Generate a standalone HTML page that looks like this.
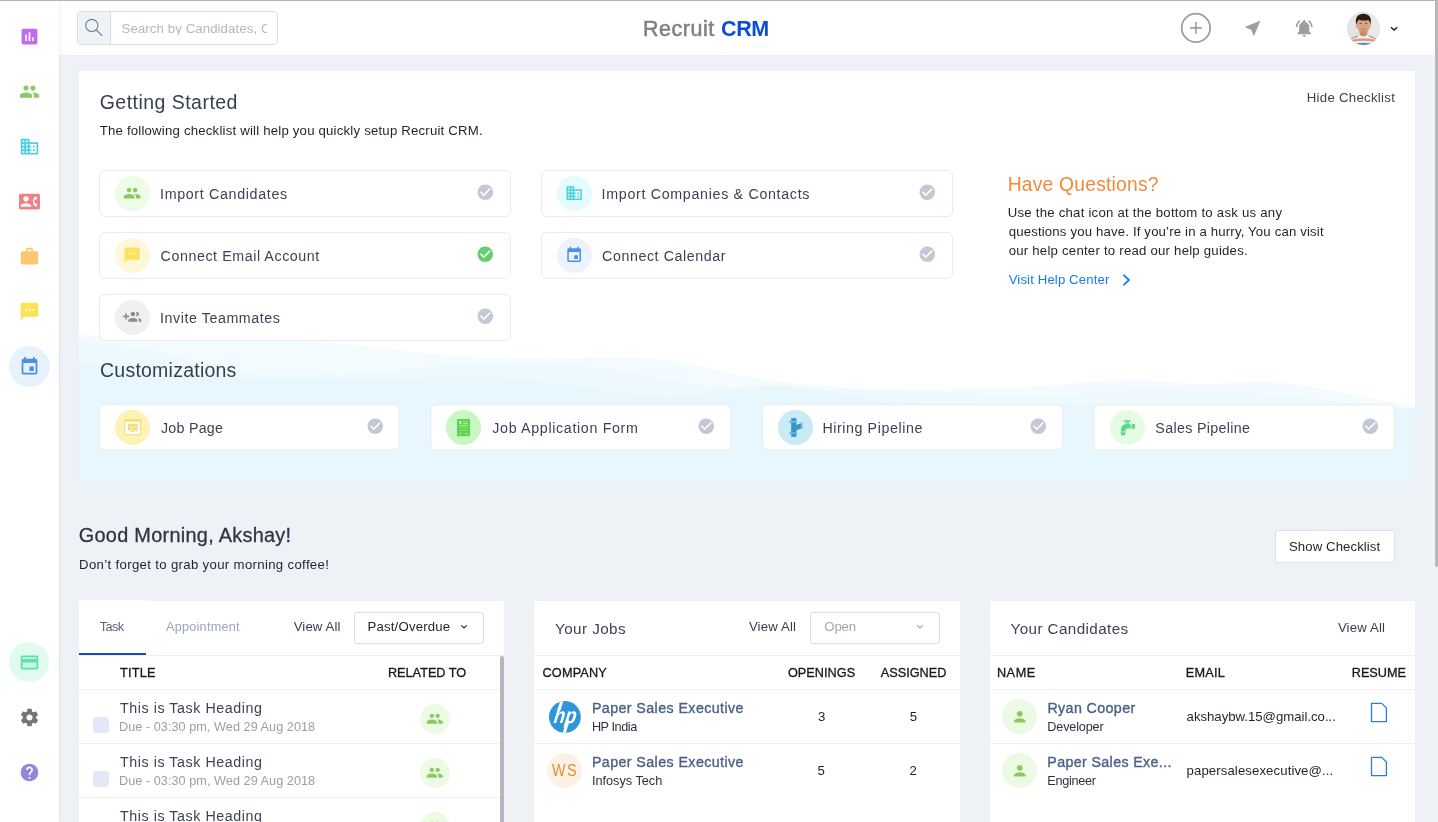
<!DOCTYPE html>
<html lang="en">
<head>
<meta charset="utf-8">
<title>Recruit CRM</title>
<style>
*{box-sizing:border-box;margin:0;padding:0}
html,body{width:1438px;height:822px;overflow:hidden;background:#eef2f7;font-family:"Liberation Sans",sans-serif;color:#1e232c}
#app{will-change:transform;position:relative;width:1438px;height:822px;overflow:hidden;background:#eef2f7}
.a{position:absolute}
.t{position:absolute;white-space:nowrap}
svg{position:absolute;display:block;overflow:visible}
.ci{position:absolute;height:47px;width:412px;border:1px solid #ebebed;border-radius:6px;background:#fff}
.cz{position:absolute;height:46px;width:301px;border:1px solid #ececec;border-radius:6px;background:#fff;top:404px}
.circ{position:absolute;border-radius:50%}
.panel{position:absolute;top:601px;height:230px;background:#fff}
.hl{position:absolute;height:1px;background:#f0f1f4}
.sel{position:absolute;top:612px;width:130px;height:32px;background:#fff;border:1px solid #d9e0ea;border-radius:3px}
.cb{position:absolute;left:93px;width:16px;height:16px;border-radius:3px;background:#e2e8f5}

</style>
</head>
<body>
<div id="app">
<div class="a" style="left:0;top:0;width:1438px;height:1px;background:#b4b4b8;z-index:50"></div>
<div class="a" style="left:1435px;top:0;width:3px;height:822px;background:#f0f1f4;z-index:60"></div>
<div class="a" style="left:1435px;top:0;width:3px;height:567px;background:#b6b6bc;border-radius:0 0 2px 2px;z-index:61"></div>
<div class="a" style="left:0;top:1px;width:59px;height:821px;background:#fff;box-shadow:1px 0 3px rgba(200,200,232,.3);z-index:5"></div>
<div class="a" style="left:59px;top:1px;width:1376px;height:54px;background:#fff;z-index:4"></div>
<svg style="left:19.00px;top:26.00px;z-index:6;" width="21" height="21" viewBox="0 0 24 24"><path fill="#bf6af0" d="M19 3H5c-1.1 0-2 .9-2 2v14c0 1.1.9 2 2 2h14c1.1 0 2-.9 2-2V5c0-1.1-.9-2-2-2zM9 17H7v-7h2v7zm4 0h-2V7h2v10zm4 0h-2v-4h2v4z"/></svg>
<svg style="left:19.00px;top:81.00px;z-index:6;" width="21" height="21" viewBox="0 0 24 24"><path fill="#8cc963" d="M16 11c1.66 0 2.99-1.34 2.99-3S17.66 5 16 5c-1.66 0-3 1.34-3 3s1.34 3 3 3zm-8 0c1.66 0 2.99-1.34 2.99-3S9.66 5 8 5C6.34 5 5 6.34 5 8s1.34 3 3 3zm0 2c-2.33 0-7 1.17-7 3.5V19h14v-2.500c0-2.33-4.67-3.500-7-3.500zm8 0c-.29 0-.62.020-.97.050 1.16.84 1.97 1.97 1.97 3.450V19h6v-2.500c0-2.330-4.670-3.500-7-3.500z"/></svg>
<svg style="left:19.00px;top:135.80px;z-index:6;" width="21" height="21" viewBox="0 0 24 24"><path fill="#4dd0e1" d="M12 7V3H2v18h20V7H12zM6 19H4v-2h2v2zm0-4H4v-2h2v2zm0-4H4V9h2v2zm0-4H4V5h2v2zm4 12H8v-2h2v2zm0-4H8v-2h2v2zm0-4H8V9h2v2zm0-4H8V5h2v2zm10 12h-8v-2h2v-2h-2v-2h2v-2h-2V9h8v10zm-2-8h-2v2h2v-2zm0 4h-2v2h2v-2z"/></svg>
<svg style="left:19.00px;top:190.80px;z-index:6;" width="21" height="21" viewBox="0 0 24 24"><path fill="#ef8287" d="M22 3H2C.9 3 0 3.9 0 5v14c0 1.1.9 2 2 2h20c1.1 0 1.99-.9 1.99-2L24 5c0-1.1-.9-2-2-2zM8 6c1.66 0 3 1.34 3 3s-1.34 3-3 3-3-1.34-3-3 1.34-3 3-3zm6 12H2v-1c0-2 4-3.1 6-3.1s6 1.1 6 3.1v1zm3.85-4h1.64L21 16l-1.99 1.99c-1.31-.98-2.28-2.38-2.73-3.99-.18-.64-.28-1.31-.28-2s.1-1.36.28-2c.45-1.620 1.420-3.010 2.730-3.990L21 8l-1.510 2h-1.640c-.22.63-.35 1.3-.35 2s.13 1.370.35 2z"/></svg>
<svg style="left:19.00px;top:245.80px;z-index:6;" width="21" height="21" viewBox="0 0 24 24"><path fill="#fdc76f" d="M20 6h-4V4c0-1.11-.89-2-2-2h-4c-1.110 0-2 .89-2 2v2H4c-1.110 0-1.990.89-1.990 2L2 19c0 1.110.89 2 2 2h16c1.110 0 2-.89 2-2V8c0-1.110-.89-2-2-2zm-6 0h-4V4h4v2z"/></svg>
<svg style="left:19.00px;top:300.90px;z-index:6;" width="21" height="21" viewBox="0 0 24 24"><path fill="#fde253" d="M20 2H4c-1.1 0-1.99.9-1.990 2L2 22l4-4h14c1.100 0 2-.9 2-2V4c0-1.100-.9-2-2-2zM9 11H7V9h2v2zm4 0h-2V9h2v2zm4 0h-2V9h2v2z"/></svg>
<div class="circ" style="left:8.50px;top:345.50px;width:41px;height:41px;background:#e8f2fd;z-index:6;"></div>
<svg style="left:19.00px;top:355.50px;z-index:6;" width="21" height="21" viewBox="0 0 24 24"><path fill="#4a8fe8" d="M17 12h-5v5h5v-5zM16 1v2H8V1H6v2H5c-1.110 0-1.990.9-1.990 2L3 19c0 1.100.89 2 2 2h14c1.100 0 2-.9 2-2V5c0-1.100-.9-2-2-2h-1V1h-2zm3 18H5V8h14v11z"/></svg>
<div class="circ" style="left:9.00px;top:642.00px;width:40px;height:40px;background:#e2fbef;z-index:6;"></div>
<svg style="left:19px;top:651.5px;z-index:6" width="21" height="21" viewBox="0 0 24 24"><rect x="3.5" y="5.500" width="17" height="13" rx="1.500" fill="#c9f6e1"/><path fill="#5fe2aa" d="M20 4H4c-1.110 0-1.990.89-1.990 2L2 18c0 1.110.89 2 2 2h16c1.110 0 2-.89 2-2V6c0-1.110-.89-2-2-2zm0 14H4v-6h16v6zm0-10H4V6h16v2z"/></svg>
<svg style="left:19.00px;top:706.70px;z-index:6;" width="21" height="21" viewBox="0 0 24 24"><path fill="#757575" d="M19.43 12.98c.04-.32.07-.64.07-.98s-.03-.66-.07-.98l2.110-1.650c.19-.15.24-.42.12-.64l-2-3.460c-.12-.22-.39-.3-.61-.22l-2.490 1c-.52-.4-1.080-.73-1.690-.98l-.38-2.650C14.460 2.180 14.250 2 14 2h-4c-.25 0-.46.18-.49.42l-.38 2.650c-.61.25-1.170.59-1.690.98l-2.490-1c-.23-.09-.49 0-.61.22l-2 3.460c-.13.22-.07.49.12.64l2.110 1.650c-.04.32-.07.65-.07.98s.03.66.07.98l-2.110 1.650c-.19.15-.24.42-.12.64l2 3.460c.12.22.39.3.61.22l2.490-1c.52.4 1.080.73 1.690.98l.38 2.650c.03.24.24.42.49.420h4c.25 0 .46-.18.49-.42l.38-2.650c.61-.25 1.170-.59 1.690-.98l2.490 1c.23.09.49 0 .61-.22l2-3.460c.12-.22.07-.49-.12-.64l-2.110-1.650zM12 15.500c-1.930 0-3.500-1.570-3.500-3.500s1.570-3.500 3.500-3.500 3.500 1.570 3.500 3.500-1.570 3.500-3.500 3.500z"/></svg>
<svg style="left:19.00px;top:762.00px;z-index:6;" width="21" height="21" viewBox="0 0 24 24"><path fill="#9087d9" d="M12 2C6.480 2 2 6.480 2 12s4.480 10 10 10 10-4.480 10-10S17.520 2 12 2zm1 17h-2v-2h2v2zm2.070-7.750l-.9.92C13.450 12.900 13 13.500 13 15h-2v-.5c0-1.100.45-2.100 1.170-2.830l1.240-1.260c.37-.36.59-.86.59-1.410 0-1.100-.9-2-2-2s-2 .9-2 2H8c0-2.210 1.790-4 4-4s4 1.790 4 4c0 .88-.36 1.680-.93 2.250z"/></svg>
<div class="a" style="left:77px;top:11px;width:201px;height:34px;border:1px solid #d6deea;border-radius:4px;background:#fff;z-index:6"><div class="a" style="left:0;top:0;width:33px;height:32px;background:#eff3f6;border-right:1px solid #d6deea;border-radius:3px 0 0 3px"></div></div>
<svg style="left:83px;top:17px;z-index:7" width="22" height="22" viewBox="0 0 22 22"><circle cx="8.800" cy="8.400" r="6.100" fill="none" stroke="#71869a" stroke-width="1.200"/><path d="M13.200 12.900L18.700 18.200" stroke="#71869a" stroke-width="1.300" stroke-linecap="round"/></svg>
<svg style="left:1180px;top:12px;z-index:7" width="32" height="32" viewBox="0 0 32 32"><circle cx="15.900" cy="15.900" r="14.200" fill="none" stroke="#9e9e9e" stroke-width="1.800"/><path d="M10 15.900H21.800M15.900 10V21.800" stroke="#9e9e9e" stroke-width="1.600"/></svg>
<svg style="left:1242.60px;top:18.10px;z-index:7;" width="20" height="20" viewBox="0 0 24 24"><path fill="#9e9e9e" d="M21 3L3 10.530v.98l6.840 2.650L12.480 21h.98L21 3z"/></svg>
<svg style="left:1294.00px;top:17.80px;z-index:7;" width="20.4" height="20.4" viewBox="0 0 24 24"><path fill="#9e9e9e" d="M7.580 4.080L6.150 2.650C3.750 4.480 2.170 7.300 2.030 10.500h2c.15-2.650 1.510-4.970 3.550-6.420zm12.390 6.420h2c-.15-3.200-1.730-6.020-4.120-7.850l-1.420 1.430c2.020 1.450 3.390 3.770 3.540 6.420zM18 11c0-3.070-1.640-5.640-4.500-6.320V4c0-.83-.67-1.500-1.500-1.500s-1.500.67-1.500 1.500v.68C7.630 5.360 6 7.920 6 11v5l-2 2v1h16v-1l-2-2v-5zm-6 11c.14 0 .27-.01.4-.04.65-.14 1.180-.58 1.440-1.180.1-.24.15-.5.15-.78h-4c.010 1.100.9 2 2.010 2z"/></svg>
<svg style="left:1347px;top:12px;z-index:7" width="33" height="33" viewBox="0 0 33 33">
<clipPath id="av"><circle cx="16.500" cy="16.500" r="16.500"/></clipPath>
<g clip-path="url(#av)">
<rect width="33" height="33" fill="#e3e3e3"/>
<rect x="22" width="11" height="33" fill="#e9e9e9"/>
<path d="M3.200 33C3.500 26.500 6 24.800 12.300 22.600L16.400 24.500L20.500 22.600C27 24.800 29.500 26.500 29.800 33Z" fill="#f4f2ef"/>
<path d="M4.300 26.200Q7.500 24.300 11.500 23L10.600 25Q7 26 3.800 27.600Z" fill="#a3a284"/>
<path d="M28.700 26.200Q25.500 24.300 21.500 23L22.400 25Q26 26 29.200 27.600Z" fill="#a3a284"/>
<path d="M3.600 28Q16.500 24.700 29.400 28L29.900 30.300Q16.500 27.300 3.100 30.300Z" fill="#e8908c"/>
<path d="M6 31.800Q16.500 29.800 27 31.800L25 34H8Z" fill="#5b8fc3"/>
<path d="M12.600 17V22.800Q16.400 26.300 20.300 22.800V17Z" fill="#c98a69"/>
<path d="M9.700 12.500Q8.600 12.300 9 14.200T10.500 16.200Z" fill="#d39a78"/>
<path d="M23.100 12.500Q24.200 12.300 23.800 14.200T22.300 16.200Z" fill="#d39a78"/>
<path d="M10.200 9.500C10.200 5.500 22.600 5.500 22.600 9.500V14.500C22.600 18.500 19.500 21.200 16.400 21.200S10.200 18.500 10.200 14.500Z" fill="#dba382"/>
<path d="M12.600 17.500Q16.400 20.500 20.200 17.500Q19 20.900 16.400 21.100Q13.800 20.900 12.600 17.500Z" fill="#c78b6c"/>
<path d="M9.600 13C7 5 11.500 1.700 16.400 1.700S25.800 5 23.200 13C23 10.500 22.300 8.700 21.300 8C18.500 8.900 14 8.700 11.800 7.700C10.700 8.700 9.900 10.500 9.600 13Z" fill="#2b1912"/>
<ellipse cx="13.600" cy="11.300" rx="1.100" ry=".55" fill="#4a3426"/><ellipse cx="19.200" cy="11.300" rx="1.100" ry=".55" fill="#4a3426"/>
<path d="M14.400 16.900Q16.400 17.700 18.400 16.900" stroke="#b5645a" stroke-width=".9" fill="none"/>
</g></svg>
<svg style="left:1390.100px;top:25.800px;z-index:7" width="8" height="6" viewBox="0 0 8 6"><path d="M1 1.200L4.100 4.100L7.200 1.200" fill="none" stroke="#1a1a1a" stroke-width="1.400"/></svg>
<div class="a" style="left:79px;top:71px;width:1336px;height:411.500px;background:#fff;overflow:hidden">
<svg style="left:0;top:0" width="1336" height="412" viewBox="79 71 1336 412">
<path d="M79 335C99.2 335.5 157.7 336.7 200 338C242.3 339.3 294.2 340.3 333 343C371.8 345.7 402.2 351.3 433 354C463.8 356.7 481.8 358.3 518 359C554.2 359.7 611.3 355.0 650 358C688.7 361.0 716.7 372.0 750 377C783.3 382.0 808.3 386.2 850 388C891.7 389.8 954.2 389.3 1000 388C1045.8 386.7 1091.7 380.7 1125 380C1158.3 379.3 1175.0 383.7 1200 384C1225.0 384.3 1250.0 380.3 1275 382C1300.0 383.7 1326.7 389.8 1350 394C1373.3 398.2 1404.2 404.8 1415 407V483H79Z" fill="#f4fbff"/>
<path d="M79 341C91.5 342.5 129.0 345.3 154 350C179.0 354.7 204.0 364.7 229 369C254.0 373.3 269.0 376.5 304 376C339.0 375.5 403.0 368.3 439 366C475.0 363.7 493.2 361.7 520 362C546.8 362.3 570.0 364.2 600 368C630.0 371.8 670.0 381.0 700 385C730.0 389.0 755.0 391.2 780 392C805.0 392.8 820.0 389.8 850 390C880.0 390.2 926.7 392.0 960 393C993.3 394.0 1022.5 396.5 1050 396C1077.5 395.5 1091.7 390.5 1125 390C1158.3 389.5 1201.7 389.7 1250 393C1298.3 396.3 1387.5 407.2 1415 410V483H79Z" fill="#eef9fe"/>
<path d="M79 362C91.5 363.7 124.8 369.2 154 372C183.2 374.8 221.3 377.7 254 379C286.7 380.3 312.3 380.3 350 380C387.7 379.7 443.3 376.2 480 377C516.7 377.8 538.8 381.7 570 385C601.2 388.3 632.0 396.8 667 397C702.0 397.2 741.7 385.2 780 386C818.3 386.8 860.3 399.0 897 402C933.7 405.0 913.7 403.0 1000 404C1086.3 405.0 1345.8 407.3 1415 408V483H79Z" fill="#e8f6fe"/>
</svg>
</div>
<div class="ci" style="left:99px;top:170px"></div>
<div class="circ" style="left:115.00px;top:176.00px;width:35px;height:35px;background:#eefbe6;"></div>
<svg style="left:123.45px;top:184.25px;" width="18.3" height="18.3" viewBox="0 0 24 24"><path fill="#8cc963" d="M16 11c1.66 0 2.99-1.34 2.99-3S17.66 5 16 5c-1.66 0-3 1.34-3 3s1.34 3 3 3zm-8 0c1.66 0 2.99-1.34 2.99-3S9.66 5 8 5C6.34 5 5 6.34 5 8s1.34 3 3 3zm0 2c-2.33 0-7 1.17-7 3.5V19h14v-2.500c0-2.33-4.67-3.500-7-3.500zm8 0c-.29 0-.62.020-.97.050 1.16.84 1.97 1.97 1.97 3.450V19h6v-2.500c0-2.330-4.670-3.500-7-3.500z"/></svg>
<svg style="left:476.00px;top:183.30px;" width="18.6" height="18.6" viewBox="0 0 24 24"><path fill="#c4c8d5" d="M12 2C6.480 2 2 6.480 2 12s4.480 10 10 10 10-4.480 10-10S17.520 2 12 2zm-2 15l-5-5 1.410-1.410L10 14.170l7.590-7.590L19 8l-9 9z"/></svg>
<div class="ci" style="left:99px;top:232px"></div>
<div class="circ" style="left:115.00px;top:238.00px;width:35px;height:35px;background:#fff7d9;"></div>
<svg style="left:123.45px;top:246.25px;" width="18.3" height="18.3" viewBox="0 0 24 24"><path fill="#fde35a" d="M20 2H4c-1.1 0-1.99.9-1.990 2L2 22l4-4h14c1.100 0 2-.9 2-2V4c0-1.100-.9-2-2-2zM9 11H7V9h2v2zm4 0h-2V9h2v2zm4 0h-2V9h2v2z"/></svg>
<svg style="left:476.00px;top:245.30px;" width="18.6" height="18.6" viewBox="0 0 24 24"><path fill="#5fd06c" d="M12 2C6.480 2 2 6.480 2 12s4.480 10 10 10 10-4.480 10-10S17.520 2 12 2zm-2 15l-5-5 1.410-1.410L10 14.170l7.590-7.590L19 8l-9 9z"/></svg>
<div class="ci" style="left:99px;top:294px"></div>
<div class="circ" style="left:115.00px;top:300.00px;width:35px;height:35px;background:#f0f0f0;"></div>
<svg style="left:123.45px;top:308.25px;" width="18.3" height="18.3" viewBox="0 0 24 24"><path fill="#8d8d8d" d="M8 10H5V7H3v3H0v2h3v3h2v-3h3v-2zm10 1c1.660 0 2.990-1.340 2.990-3S19.660 5 18 5c-.32 0-.63.05-.91.14.57.81.9 1.790.9 2.860s-.34 2.040-.9 2.860c.28.09.59.14.91.14zm-5 0c1.660 0 2.990-1.340 2.990-3S14.660 5 13 5c-1.660 0-3 1.340-3 3s1.340 3 3 3zm6.620 2.160c.83.73 1.380 1.660 1.380 2.840v2h3v-2c0-1.540-2.370-2.490-4.380-2.840zM13 13c-2 0-6 1-6 3v2h12v-2c0-2-4-3-6-3z"/></svg>
<svg style="left:476.00px;top:307.30px;" width="18.6" height="18.6" viewBox="0 0 24 24"><path fill="#c4c8d5" d="M12 2C6.480 2 2 6.480 2 12s4.480 10 10 10 10-4.480 10-10S17.520 2 12 2zm-2 15l-5-5 1.410-1.410L10 14.170l7.590-7.590L19 8l-9 9z"/></svg>
<div class="ci" style="left:541px;top:170px"></div>
<div class="circ" style="left:557.00px;top:176.00px;width:35px;height:35px;background:#e5fcfc;"></div>
<svg style="left:565.45px;top:184.25px;" width="18.3" height="18.3" viewBox="0 0 24 24"><path fill="#4dd0e1" d="M12 7V3H2v18h20V7H12zM6 19H4v-2h2v2zm0-4H4v-2h2v2zm0-4H4V9h2v2zm0-4H4V5h2v2zm4 12H8v-2h2v2zm0-4H8v-2h2v2zm0-4H8V9h2v2zm0-4H8V5h2v2zm10 12h-8v-2h2v-2h-2v-2h2v-2h-2V9h8v10zm-2-8h-2v2h2v-2zm0 4h-2v2h2v-2z"/></svg>
<svg style="left:918.00px;top:183.30px;" width="18.6" height="18.6" viewBox="0 0 24 24"><path fill="#c4c8d5" d="M12 2C6.480 2 2 6.480 2 12s4.480 10 10 10 10-4.480 10-10S17.520 2 12 2zm-2 15l-5-5 1.410-1.410L10 14.170l7.590-7.590L19 8l-9 9z"/></svg>
<div class="ci" style="left:541px;top:232px"></div>
<div class="circ" style="left:557.00px;top:238.00px;width:35px;height:35px;background:#ebf4fe;"></div>
<svg style="left:565.45px;top:246.25px;" width="18.3" height="18.3" viewBox="0 0 24 24"><path fill="#4d92e8" d="M17 12h-5v5h5v-5zM16 1v2H8V1H6v2H5c-1.110 0-1.990.9-1.990 2L3 19c0 1.100.89 2 2 2h14c1.100 0 2-.9 2-2V5c0-1.100-.9-2-2-2h-1V1h-2zm3 18H5V8h14v11z"/></svg>
<svg style="left:918.00px;top:245.30px;" width="18.6" height="18.6" viewBox="0 0 24 24"><path fill="#c4c8d5" d="M12 2C6.480 2 2 6.480 2 12s4.480 10 10 10 10-4.480 10-10S17.520 2 12 2zm-2 15l-5-5 1.410-1.410L10 14.170l7.590-7.590L19 8l-9 9z"/></svg>
<svg style="left:1121px;top:273px" width="11" height="14" viewBox="0 0 11 14"><path d="M2.500 1.800L8 7L2.500 12.200" fill="none" stroke="#157cf0" stroke-width="1.800"/></svg>
<div class="cz" style="left:98px;width:301px;transform:translate(0.8px,.3px)"></div>
<svg style="left:365.70px;top:417.10px;" width="18.6" height="18.6" viewBox="0 0 24 24"><path fill="#c4c8d5" d="M12 2C6.480 2 2 6.480 2 12s4.480 10 10 10 10-4.480 10-10S17.520 2 12 2zm-2 15l-5-5 1.410-1.410L10 14.170l7.590-7.590L19 8l-9 9z"/></svg>
<div class="cz" style="left:430px;width:301px;transform:translate(0.4px,.3px)"></div>
<svg style="left:696.70px;top:417.10px;" width="18.6" height="18.6" viewBox="0 0 24 24"><path fill="#c4c8d5" d="M12 2C6.480 2 2 6.480 2 12s4.480 10 10 10 10-4.480 10-10S17.520 2 12 2zm-2 15l-5-5 1.410-1.410L10 14.170l7.590-7.590L19 8l-9 9z"/></svg>
<div class="cz" style="left:762px;width:301px;transform:translate(0.2px,.3px)"></div>
<svg style="left:1028.70px;top:417.10px;" width="18.6" height="18.6" viewBox="0 0 24 24"><path fill="#c4c8d5" d="M12 2C6.480 2 2 6.480 2 12s4.480 10 10 10 10-4.480 10-10S17.520 2 12 2zm-2 15l-5-5 1.410-1.410L10 14.170l7.590-7.590L19 8l-9 9z"/></svg>
<div class="cz" style="left:1093px;width:301px;transform:translate(0.6px,.3px)"></div>
<svg style="left:1360.70px;top:417.10px;" width="18.6" height="18.6" viewBox="0 0 24 24"><path fill="#c4c8d5" d="M12 2C6.480 2 2 6.480 2 12s4.480 10 10 10 10-4.480 10-10S17.520 2 12 2zm-2 15l-5-5 1.410-1.410L10 14.170l7.590-7.590L19 8l-9 9z"/></svg>
<div class="circ" style="left:115.10px;top:410.00px;width:35px;height:35px;background:#fef2b6;"></div>
<svg style="left:123.800px;top:419.300px" width="17.300" height="16.400" viewBox="0 0 18 17">
<rect x=".7" y=".7" width="16.600" height="15.600" fill="#fff" stroke="#fbd96a" stroke-width="1"/>
<rect x=".5" y=".5" width="17" height="2.300" fill="#fbdc6e"/>
<rect x="4.500" y="5.300" width="9" height="6" fill="#f3e88f" stroke="#fbd050" stroke-width=".8"/>
<rect x="7.300" y="12.300" width="3.200" height="1.200" fill="#f6d86a"/>
<path d="M11 10L14.500 13.500M13.500 9.800L12.300 12.800" stroke="#fbd050" stroke-width=".8"/>
</svg>
<div class="circ" style="left:446.00px;top:410.00px;width:35px;height:35px;background:#c9f7c4;"></div>
<svg style="left:457px;top:418.800px" width="13" height="17.200" viewBox="0 0 13 17.200">
<rect width="13" height="17.200" fill="#5fd34b"/>
<rect x="2" y="2" width="2.500" height="3" fill="#b5ecab"/>
<rect x="6" y="2" width="4.800" height="1.100" fill="#9de48f"/><rect x="6" y="4.300" width="4.800" height=".8" fill="#c9f3c1"/>
<rect x="2" y="6.400" width="8.800" height=".8" fill="#c9f3c1"/><rect x="2" y="8.500" width="8.800" height=".8" fill="#8fe080"/>
<rect x="2" y="11.200" width="8.800" height=".8" fill="#8fe080"/><rect x="2" y="14.200" width="3" height=".9" fill="#b5ecab"/><rect x="8" y="14.200" width="3" height=".9" fill="#b5ecab"/>
</svg>
<div class="circ" style="left:778.10px;top:410.00px;width:35px;height:35px;background:#c8ebf5;"></div>
<svg style="left:788.800px;top:418px" width="15" height="19" viewBox="0 0 15 19">
<rect x="2.200" y=".1" width="5.100" height="18.700" fill="#3596c6"/>
<path d="M7.200 6.800C9.500 6.800 10.500 5.600 12.200 5.300V10.500C10.500 10.800 9 11.500 7.200 13Z" fill="#3596c6"/>
<rect x=".4" y="3.100" width="7.800" height="1.500" rx=".7" fill="#8fd3ee" stroke="#3f9fcf" stroke-width=".5"/>
<rect x=".4" y="14.300" width="7.800" height="1.500" rx=".7" fill="#8fd3ee" stroke="#3f9fcf" stroke-width=".5"/>
<rect x="12.300" y="4.600" width="1.300" height="6.200" rx=".5" fill="#d9f1fa" stroke="#3f9fcf" stroke-width=".5"/>
</svg>
<div class="circ" style="left:1109.90px;top:410.00px;width:35px;height:35px;background:#e5fbe3;"></div>
<svg style="left:1119.800px;top:419.500px" width="15.400" height="16" viewBox="0 0 16 16" preserveAspectRatio="none">
<rect x="3.500" y=".3" width="7.900" height="1.300" rx=".5" fill="#5cd88a"/>
<rect x="5.700" y="1" width="3.500" height="4" fill="#5cd88a"/>
<rect x="6.700" y="2.500" width="1.500" height="1.700" fill="#a9ecc3"/>
<path d="M11 4.200H5.500C2.500 4.200 1 7 1 11.500H5.500C5.500 9.500 6.500 8.500 8 8.500H11Z" fill="#5cd88a"/>
<rect x="11.500" y="3.200" width="1.300" height="6.200" rx=".5" fill="#8fe6b0"/>
<rect x="12.800" y="4" width="2.700" height="4.700" fill="#5cd88a"/>
<rect x=".3" y="11.400" width="5.800" height="1.600" rx=".6" fill="#7fe2a6"/>
<rect x="1" y="13" width="4.400" height="2.300" fill="#5cd88a"/>
</svg>
<div class="a" style="left:1275px;top:530px;width:120px;height:33px;background:#fff;border:1px solid #dce2ea;border-radius:3px"></div>
<div class="panel" style="left:79px;width:425px"></div>
<div class="a" style="left:79px;top:600px;width:67px;height:10px;background:#fff"></div>
<div class="panel" style="left:534px;width:426px"></div>
<div class="panel" style="left:990px;width:425px"></div>
<div class="hl" style="left:79px;top:655px;width:425px"></div>
<div class="a" style="left:79px;top:653px;width:67px;height:2px;background:#134ad6"></div>
<div class="sel" style="left:354px"></div>
<svg style="left:460px;top:623.500px" width="8" height="6" viewBox="0 0 8 6"><path d="M1.300 1.400L4 4L6.700 1.400" fill="none" stroke="#2a2f3a" stroke-width="1.200"/></svg>
<div class="hl" style="left:79px;top:689px;width:421px"></div>
<div class="hl" style="left:79px;top:743px;width:421px"></div>
<div class="hl" style="left:79px;top:797px;width:421px"></div>
<div class="cb" style="top:717px"></div>
<div class="circ" style="left:419.90px;top:704.00px;width:30px;height:30px;background:#edfae4;"></div>
<svg style="left:426.15px;top:710.05px;" width="17.5" height="17.5" viewBox="0 0 24 24"><path fill="#8cc963" d="M16 11c1.66 0 2.99-1.34 2.99-3S17.66 5 16 5c-1.66 0-3 1.34-3 3s1.34 3 3 3zm-8 0c1.66 0 2.99-1.34 2.99-3S9.66 5 8 5C6.34 5 5 6.34 5 8s1.34 3 3 3zm0 2c-2.33 0-7 1.17-7 3.5V19h14v-2.500c0-2.33-4.67-3.500-7-3.500zm8 0c-.29 0-.62.020-.97.050 1.16.84 1.97 1.97 1.97 3.450V19h6v-2.500c0-2.330-4.670-3.500-7-3.500z"/></svg>
<div class="cb" style="top:771px"></div>
<div class="circ" style="left:419.90px;top:758.00px;width:30px;height:30px;background:#edfae4;"></div>
<svg style="left:426.15px;top:764.05px;" width="17.5" height="17.5" viewBox="0 0 24 24"><path fill="#8cc963" d="M16 11c1.66 0 2.99-1.34 2.99-3S17.66 5 16 5c-1.66 0-3 1.34-3 3s1.34 3 3 3zm-8 0c1.66 0 2.99-1.34 2.99-3S9.66 5 8 5C6.34 5 5 6.34 5 8s1.34 3 3 3zm0 2c-2.33 0-7 1.17-7 3.5V19h14v-2.500c0-2.33-4.67-3.500-7-3.500zm8 0c-.29 0-.62.020-.97.050 1.16.84 1.97 1.97 1.97 3.450V19h6v-2.500c0-2.330-4.670-3.500-7-3.500z"/></svg>
<div class="cb" style="top:825px"></div>
<div class="circ" style="left:419.90px;top:812.00px;width:30px;height:30px;background:#edfae4;"></div>
<svg style="left:426.15px;top:818.05px;" width="17.5" height="17.5" viewBox="0 0 24 24"><path fill="#8cc963" d="M16 11c1.66 0 2.99-1.34 2.99-3S17.66 5 16 5c-1.66 0-3 1.34-3 3s1.34 3 3 3zm-8 0c1.66 0 2.99-1.34 2.99-3S9.66 5 8 5C6.34 5 5 6.34 5 8s1.34 3 3 3zm0 2c-2.33 0-7 1.17-7 3.5V19h14v-2.500c0-2.33-4.67-3.500-7-3.500zm8 0c-.29 0-.62.020-.97.050 1.16.84 1.97 1.97 1.97 3.450V19h6v-2.500c0-2.330-4.670-3.500-7-3.500z"/></svg>
<div class="a" style="left:500.300px;top:656px;width:3.400px;height:175px;background:#b6b6bc;border-radius:2px"></div>
<div class="hl" style="left:534px;top:655px;width:426px"></div>
<div class="sel" style="left:810px"></div>
<svg style="left:915.500px;top:623.500px" width="8" height="6" viewBox="0 0 8 6"><path d="M1.200 1.400L4 4.100L6.800 1.400" fill="none" stroke="#9a9fa8" stroke-width="1.100"/></svg>
<div class="hl" style="left:534px;top:689px;width:426px"></div>
<div class="hl" style="left:534px;top:743px;width:426px"></div>
<svg style="left:548.700px;top:700.500px" width="31.800" height="31.800" viewBox="0 0 31.800 31.800">
<clipPath id="hpc"><circle cx="15.900" cy="15.900" r="15.900"/></clipPath>
<g clip-path="url(#hpc)"><rect width="32" height="32" fill="#3096d8"/>
<g transform="translate(0 22.100) skewX(-17)">
<rect x="4.400" y="-24" width="3.200" height="12" fill="#fff"/>
<rect x="16.700" y="-2" width="3.200" height="14" fill="#fff"/>
<text x="3.200" y="0" font-family="Liberation Sans, sans-serif" font-size="21.800" font-weight="700" fill="#fff" textLength="22.500" lengthAdjust="spacingAndGlyphs">hp</text>
</g></g></svg>
<div class="circ" style="left:546.80px;top:753.00px;width:35px;height:35px;background:#fdf0e6;"></div>
<div class="hl" style="left:990px;top:655px;width:425px"></div>
<div class="hl" style="left:990px;top:689px;width:425px"></div>
<div class="hl" style="left:990px;top:743px;width:425px"></div>
<div class="circ" style="left:1002.20px;top:699.00px;width:35px;height:35px;background:#ecfae3;"></div>
<svg style="left:1010.95px;top:707.55px;" width="17.5" height="17.5" viewBox="0 0 24 24"><path fill="#8cc963" d="M12 12c2.210 0 4-1.790 4-4s-1.790-4-4-4-4 1.790-4 4 1.790 4 4 4zm0 2c-2.670 0-8 1.340-8 4v2h16v-2c0-2.660-5.330-4-8-4z"/></svg>
<svg style="left:1370px;top:701.7px" width="18" height="21" viewBox="0 0 18 21"><path d="M1.500 1.400H11.700L16.400 6V19.600H1.500Z" fill="#fff" stroke="#2f7be6" stroke-width="1.300" stroke-linejoin="round"/></svg>
<div class="circ" style="left:1002.20px;top:753.00px;width:35px;height:35px;background:#ecfae3;"></div>
<svg style="left:1010.95px;top:761.55px;" width="17.5" height="17.5" viewBox="0 0 24 24"><path fill="#8cc963" d="M12 12c2.210 0 4-1.790 4-4s-1.790-4-4-4-4 1.790-4 4 1.790 4 4 4zm0 2c-2.670 0-8 1.340-8 4v2h16v-2c0-2.660-5.330-4-8-4z"/></svg>
<svg style="left:1370px;top:755.7px" width="18" height="21" viewBox="0 0 18 21"><path d="M1.500 1.400H11.700L16.400 6V19.600H1.500Z" fill="#fff" stroke="#2f7be6" stroke-width="1.300" stroke-linejoin="round"/></svg>
<!-- TEXT -->
<div class="t" style="left:121.60px;top:22.00px;font-size:13.2px;line-height:13.2px;color:#b3b8bf;letter-spacing:0.102px;z-index:7;width:145.40px;overflow:hidden;">Search by Candidates, Companies, Contacts</div>
<div class="t" style="left:643.00px;top:19.00px;font-size:21.5px;line-height:21.5px;color:#808080;letter-spacing:0.529px;-webkit-text-stroke:0.5px #808080;z-index:7;">Recruit</div>
<div class="t" style="left:721.00px;top:19.00px;font-size:21.5px;line-height:21.5px;color:#0a4ddb;letter-spacing:-0.377px;font-weight:700;z-index:7;">CRM</div>
<div class="t" style="left:99.70px;top:93.00px;font-size:19.5px;line-height:19.5px;color:#363f4f;letter-spacing:0.470px;">Getting Started</div>
<div class="t" style="left:99.70px;top:124.00px;font-size:13.2px;line-height:13.2px;color:#1e232c;letter-spacing:0.204px;">The following checklist will help you quickly setup Recruit CRM.</div>
<div class="t" style="left:1306.80px;top:91.00px;font-size:13.2px;line-height:13.2px;color:#3a4252;letter-spacing:0.291px;">Hide Checklist</div>
<div class="t" style="left:160.00px;top:187.00px;font-size:14.25px;line-height:14.25px;color:#3b4454;letter-spacing:0.668px;">Import Candidates</div>
<div class="t" style="left:160.60px;top:249.00px;font-size:14.25px;line-height:14.25px;color:#3b4454;letter-spacing:0.567px;">Connect Email Account</div>
<div class="t" style="left:160.00px;top:311.00px;font-size:14.25px;line-height:14.25px;color:#3b4454;letter-spacing:0.564px;">Invite Teammates</div>
<div class="t" style="left:601.60px;top:187.00px;font-size:14.25px;line-height:14.25px;color:#3b4454;letter-spacing:0.683px;">Import Companies &amp; Contacts</div>
<div class="t" style="left:602.10px;top:249.00px;font-size:14.25px;line-height:14.25px;color:#3b4454;letter-spacing:0.566px;">Connect Calendar</div>
<div class="t" style="left:1007.70px;top:175.00px;font-size:19.3px;line-height:19.3px;color:#f08a3c;letter-spacing:0.208px;">Have Questions?</div>
<div class="t" style="left:1007.70px;top:206.00px;font-size:13.2px;line-height:13.2px;color:#1e232c;letter-spacing:0.236px;">Use the chat icon at the bottom to ask us any</div>
<div class="t" style="left:1008.70px;top:225.00px;font-size:13.2px;line-height:13.2px;color:#1e232c;letter-spacing:0.162px;">questions you have. If you’re in a hurry, You can visit</div>
<div class="t" style="left:1008.70px;top:244.00px;font-size:13.2px;line-height:13.2px;color:#1e232c;letter-spacing:0.225px;">our help center to read our help guides.</div>
<div class="t" style="left:1008.70px;top:273.00px;font-size:13.2px;line-height:13.2px;color:#157cf0;letter-spacing:0.118px;">Visit Help Center</div>
<div class="t" style="left:100.00px;top:361.00px;font-size:19.5px;line-height:19.5px;color:#363f4f;letter-spacing:0.235px;">Customizations</div>
<div class="t" style="left:161.00px;top:421.00px;font-size:14.25px;line-height:14.25px;color:#3b4454;letter-spacing:0.244px;">Job Page</div>
<div class="t" style="left:492.30px;top:421.00px;font-size:14.25px;line-height:14.25px;color:#3b4454;letter-spacing:0.659px;">Job Application Form</div>
<div class="t" style="left:822.40px;top:421.00px;font-size:14.25px;line-height:14.25px;color:#3b4454;letter-spacing:0.575px;">Hiring Pipeline</div>
<div class="t" style="left:1155.30px;top:421.00px;font-size:14.25px;line-height:14.25px;color:#3b4454;letter-spacing:0.332px;">Sales Pipeline</div>
<div class="t" style="left:78.70px;top:526.00px;font-size:19.9px;line-height:19.9px;color:#2d3545;letter-spacing:0.284px;-webkit-text-stroke:0.28px #2d3545;">Good Morning, Akshay!</div>
<div class="t" style="left:79.10px;top:558.00px;font-size:13.2px;line-height:13.2px;color:#1e232c;letter-spacing:0.331px;">Don’t forget to grab your morning coffee!</div>
<div class="t" style="left:1289.00px;top:540.00px;font-size:13.2px;line-height:13.2px;color:#1e232c;letter-spacing:0.078px;">Show Checklist</div>
<div class="t" style="left:99.70px;top:621.00px;font-size:12.7px;line-height:12.7px;color:#586278;letter-spacing:-0.547px;">Task</div>
<div class="t" style="left:166.00px;top:621.00px;font-size:12.7px;line-height:12.7px;color:#9aa5bf;letter-spacing:0.229px;">Appointment</div>
<div class="t" style="left:293.70px;top:620.00px;font-size:13.2px;line-height:13.2px;color:#363f4f;letter-spacing:0.109px;">View All</div>
<div class="t" style="left:367.50px;top:620.00px;font-size:13.2px;line-height:13.2px;color:#1e232c;letter-spacing:0.182px;">Past/Overdue</div>
<div class="t" style="left:120.00px;top:667.00px;font-size:12.7px;line-height:12.7px;color:#15181e;letter-spacing:0.255px;-webkit-text-stroke:0.3px #15181e;">TITLE</div>
<div class="t" style="left:387.90px;top:667.00px;font-size:12.7px;line-height:12.7px;color:#15181e;letter-spacing:0.009px;-webkit-text-stroke:0.3px #15181e;">RELATED TO</div>
<div class="t" style="left:120.00px;top:701.00px;font-size:14.25px;line-height:14.25px;color:#3b4454;letter-spacing:0.561px;">This is Task Heading</div>
<div class="t" style="left:119.00px;top:721.00px;font-size:12.7px;line-height:12.7px;color:#9a9ea6;letter-spacing:0.034px;">Due - 03:30 pm, Wed 29 Aug 2018</div>
<div class="t" style="left:120.00px;top:755.00px;font-size:14.25px;line-height:14.25px;color:#3b4454;letter-spacing:0.561px;">This is Task Heading</div>
<div class="t" style="left:119.00px;top:775.00px;font-size:12.7px;line-height:12.7px;color:#9a9ea6;letter-spacing:0.034px;">Due - 03:30 pm, Wed 29 Aug 2018</div>
<div class="t" style="left:120.00px;top:809.00px;font-size:14.25px;line-height:14.25px;color:#3b4454;letter-spacing:0.561px;">This is Task Heading</div>
<div class="t" style="left:555.00px;top:621.00px;font-size:15.25px;line-height:15.25px;color:#3b4454;letter-spacing:0.420px;">Your Jobs</div>
<div class="t" style="left:748.90px;top:620.00px;font-size:13.2px;line-height:13.2px;color:#363f4f;letter-spacing:0.166px;">View All</div>
<div class="t" style="left:824.30px;top:620.00px;font-size:13.2px;line-height:13.2px;color:#a2a6ad;letter-spacing:-0.175px;">Open</div>
<div class="t" style="left:542.50px;top:667.00px;font-size:12.7px;line-height:12.7px;color:#15181e;letter-spacing:0.176px;-webkit-text-stroke:0.3px #15181e;">COMPANY</div>
<div class="t" style="left:787.90px;top:667.00px;font-size:12.7px;line-height:12.7px;color:#15181e;letter-spacing:0.041px;-webkit-text-stroke:0.3px #15181e;">OPENINGS</div>
<div class="t" style="left:880.80px;top:667.00px;font-size:12.7px;line-height:12.7px;color:#15181e;letter-spacing:-0.001px;-webkit-text-stroke:0.3px #15181e;">ASSIGNED</div>
<div class="t" style="left:591.90px;top:701.00px;font-size:14.25px;line-height:14.25px;color:#4c6088;letter-spacing:0.413px;-webkit-text-stroke:0.35px #4c6088;">Paper Sales Executive</div>
<div class="t" style="left:591.90px;top:721.00px;font-size:12.7px;line-height:12.7px;color:#2c3340;letter-spacing:-0.444px;">HP India</div>
<div class="t" style="left:591.90px;top:755.00px;font-size:14.25px;line-height:14.25px;color:#4c6088;letter-spacing:0.413px;-webkit-text-stroke:0.35px #4c6088;">Paper Sales Executive</div>
<div class="t" style="left:591.90px;top:775.00px;font-size:12.7px;line-height:12.7px;color:#2c3340;letter-spacing:0.004px;">Infosys Tech</div>
<div class="t" style="left:552.30px;top:762.00px;font-size:17px;line-height:17px;color:#df932c;letter-spacing:1.883px;transform:scaleX(.84);transform-origin:0 0;">WS</div>
<div class="t" style="left:818.00px;top:710.00px;font-size:13.2px;line-height:13.2px;color:#1e232c;letter-spacing:0.000px;">3</div>
<div class="t" style="left:909.80px;top:710.00px;font-size:13.2px;line-height:13.2px;color:#1e232c;letter-spacing:0.000px;">5</div>
<div class="t" style="left:817.50px;top:764.00px;font-size:13.2px;line-height:13.2px;color:#1e232c;letter-spacing:0.000px;">5</div>
<div class="t" style="left:909.60px;top:764.00px;font-size:13.2px;line-height:13.2px;color:#1e232c;letter-spacing:0.000px;">2</div>
<div class="t" style="left:1010.60px;top:621.00px;font-size:15.25px;line-height:15.25px;color:#3b4454;letter-spacing:0.387px;">Your Candidates</div>
<div class="t" style="left:1337.90px;top:621.00px;font-size:13.2px;line-height:13.2px;color:#363f4f;letter-spacing:0.166px;">View All</div>
<div class="t" style="left:996.90px;top:667.00px;font-size:12.7px;line-height:12.7px;color:#15181e;letter-spacing:0.569px;-webkit-text-stroke:0.3px #15181e;">NAME</div>
<div class="t" style="left:1185.70px;top:667.00px;font-size:12.7px;line-height:12.7px;color:#15181e;letter-spacing:0.245px;-webkit-text-stroke:0.3px #15181e;">EMAIL</div>
<div class="t" style="left:1351.80px;top:667.00px;font-size:12.7px;line-height:12.7px;color:#15181e;letter-spacing:-0.024px;-webkit-text-stroke:0.3px #15181e;">RESUME</div>
<div class="t" style="left:1047.40px;top:701.00px;font-size:14.25px;line-height:14.25px;color:#4c6088;letter-spacing:0.388px;-webkit-text-stroke:0.35px #4c6088;">Ryan Cooper</div>
<div class="t" style="left:1047.30px;top:721.00px;font-size:12.7px;line-height:12.7px;color:#2c3340;letter-spacing:-0.188px;">Developer</div>
<div class="t" style="left:1047.30px;top:755.00px;font-size:14.25px;line-height:14.25px;color:#4c6088;letter-spacing:0.361px;-webkit-text-stroke:0.35px #4c6088;">Paper Sales Exe...</div>
<div class="t" style="left:1047.30px;top:775.00px;font-size:12.7px;line-height:12.7px;color:#2c3340;letter-spacing:-0.309px;">Engineer</div>
<div class="t" style="left:1186.60px;top:710.00px;font-size:13.2px;line-height:13.2px;color:#1e232c;letter-spacing:-0.021px;">akshaybw.15@gmail.co...</div>
<div class="t" style="left:1186.60px;top:764.00px;font-size:13.2px;line-height:13.2px;color:#1e232c;letter-spacing:0.089px;">papersalesexecutive@...</div>
</div>
</body>
</html>
